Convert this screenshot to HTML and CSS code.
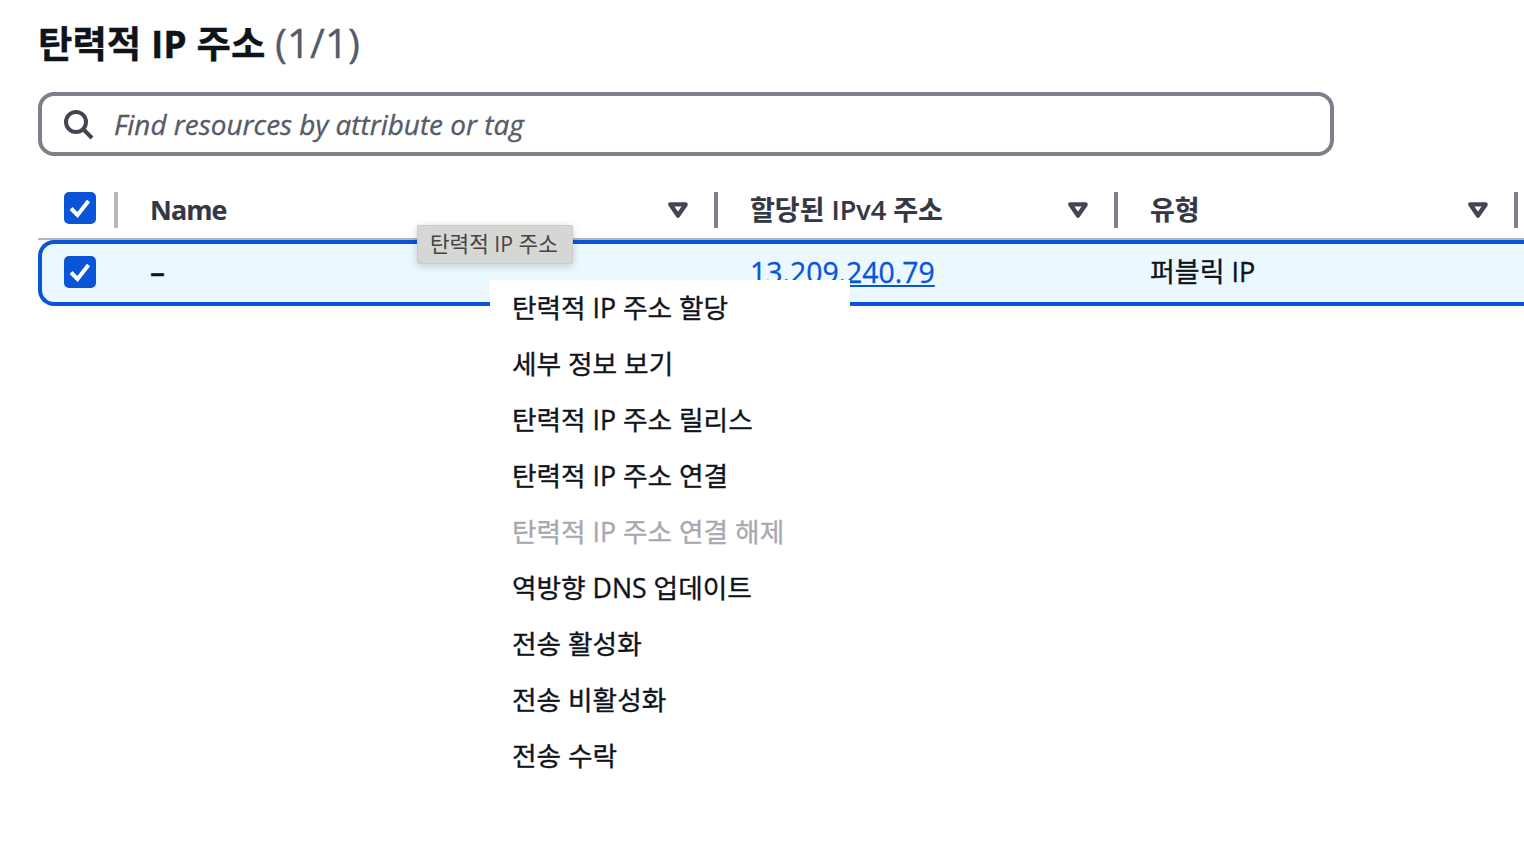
FILE: index.html
```html
<!DOCTYPE html>
<html lang="ko">
<head>
<meta charset="utf-8">
<title>탄력적 IP 주소</title>
<link rel="stylesheet" href="styles.css">
</head>
<body>
<main class="page">
  <h1 class="title">탄력적 IP 주소 <span class="count">(1/1)</span></h1>
  <div class="search">
    <svg class="search-icon" viewBox="0 0 32 32" width="32" height="32"><circle cx="14" cy="14" r="10" fill="none" stroke="#424650" stroke-width="4"/><path d="M21 21l9 9" fill="none" stroke="#424650" stroke-width="4"/></svg>
    <span class="placeholder">Find resources by attribute or tag</span>
  </div>
  <div class="table">
    <div class="thead">
      <div class="cell-check">
        <svg class="check" viewBox="0 0 32 32" width="32" height="32"><rect width="32" height="32" rx="5" fill="#0a54d8"/><path d="M7 16.5l6.5 6.5L24.5 9" fill="none" stroke="#fff" stroke-width="4"/></svg>
        <span class="divider divider-light"></span>
      </div>
      <div class="th"><span class="th-label th-name">Name</span><svg class="caret" viewBox="0 0 20 16" width="20" height="16"><path d="M2.4 2.4h15.2L10 13.6z" fill="none" stroke="#424650" stroke-width="4.4" stroke-linejoin="round"/></svg><span class="divider"></span></div>
      <div class="th"><span class="th-label">할당된 IPv4 주소</span><svg class="caret" viewBox="0 0 20 16" width="20" height="16"><path d="M2.4 2.4h15.2L10 13.6z" fill="none" stroke="#424650" stroke-width="4.4" stroke-linejoin="round"/></svg><span class="divider"></span></div>
      <div class="th"><span class="th-label">유형</span><svg class="caret" viewBox="0 0 20 16" width="20" height="16"><path d="M2.4 2.4h15.2L10 13.6z" fill="none" stroke="#424650" stroke-width="4.4" stroke-linejoin="round"/></svg><span class="divider"></span></div>
    </div>
    <div class="row">
      <div class="cell-check">
        <svg class="check" viewBox="0 0 32 32" width="32" height="32"><rect width="32" height="32" rx="5" fill="#0a54d8"/><path d="M7 16.5l6.5 6.5L24.5 9" fill="none" stroke="#fff" stroke-width="4"/></svg>
      </div>
      <div class="td"><span class="dash">–</span></div>
      <div class="td"><a class="link" href="#">13.209.240.79</a></div>
      <div class="td">퍼블릭 IP</div>
    </div>
  </div>
</main>
<div class="tooltip">탄력적 IP 주소</div>
<ul class="menu">
  <li class="menu-item">탄력적 IP 주소 할당</li>
  <li class="menu-item">세부 정보 보기</li>
  <li class="menu-item">탄력적 IP 주소 릴리스</li>
  <li class="menu-item">탄력적 IP 주소 연결</li>
  <li class="menu-item menu-item-disabled">탄력적 IP 주소 연결 해제</li>
  <li class="menu-item">역방향 DNS 업데이트</li>
  <li class="menu-item">전송 활성화</li>
  <li class="menu-item">전송 비활성화</li>
  <li class="menu-item">전송 수락</li>
</ul>
</body>
</html>
```
FILE: styles.css
```css
* { box-sizing: border-box; }
html, body { margin: 0; height: 100%; }
body {
  position: relative;
  overflow: hidden;
  background: #fff;
  color: #0f141a;
  font-family: "Open Sans", "Noto Sans CJK KR", sans-serif;
  font-size: 27px;
  font-weight: 400;
  -webkit-text-stroke: .35px currentColor;
}
.page { width: 1524px; padding: 20px 0 0 38px; }
.title {
  height: 48px;
  margin: 0;
  font-size: 37.4px;
  font-weight: 700;
  line-height: 48px;
}
.count { font-size: 40.5px; line-height: 1; font-weight: 400; color: #565b66; }
.search {
  display: flex;
  align-items: center;
  width: 1296px;
  height: 64px;
  margin-top: 24px;
  padding-left: 20px;
  border: 4px solid #7d8089;
  border-radius: 16px;
}
.search-icon { flex: none; width: 32px; height: 32px; }
.placeholder { margin-left: 20px; font-size: 27.9px; font-style: italic; color: #565b66; }
.table { margin-top: 36px; }
.thead {
  display: grid;
  grid-template-columns: 80px 600px 400px 400px;
  height: 48px;
  border-bottom: 2px solid #b4b4bb;
}
.th {
  display: flex;
  align-items: flex-start;
  padding-left: 32px;
  font-size: 27px;
  font-weight: 600;
  color: #333843;
  -webkit-text-stroke: .15px currentColor;
}
.th-label { flex: 1; line-height: 36px; }
.th-name { font-size: 26.8px; font-weight: 700; letter-spacing: -.9px; }
.caret { flex: none; margin-top: 10px; }
.divider { flex: none; width: 4px; height: 36px; margin-left: 26px; background: #7d7f88; }
.cell-check { display: flex; align-items: flex-start; padding-left: 26px; }
.cell-check .divider { margin-left: 18px; }
.divider-light { background: #b8b8c0; }
.check { flex: none; }
.row {
  display: grid;
  grid-template-columns: 76px 600px 400px 410px;
  height: 66px;
  width: 1500px;
  padding-bottom: 2px;
  border: 4px solid #0a54d8;
  border-right: 0;
  border-radius: 16px 0 0 16px;
  background: #ebf8ff;
  align-items: center;
}
.row .cell-check { padding-left: 22px; align-items: center; }
.td { padding-left: 32px; line-height: 34px; }
.dash { font-size: 30px; font-weight: 600; }
.link { color: #0a54d8; text-decoration: underline; font-size: 28.4px; }
.tooltip {
  position: absolute;
  left: 417px;
  top: 225px;
  width: 156px;
  height: 39px;
  padding-left: 12px;
  background: #d6d6d4;
  border: 1px solid #cbcbc9;
  border-radius: 2px;
  box-shadow: 0 2px 8px rgba(0, 0, 0, .18);
  color: #444;
  font-size: 21.3px;
  line-height: 35px;
  -webkit-text-stroke: 0;
  white-space: nowrap;
}
.menu {
  position: absolute;
  left: 490px;
  top: 280px;
  width: 360px;
  margin: 0;
  padding: 0;
  list-style: none;
  background: #fff;
}
.menu-item { height: 56px; padding-left: 22px; font-size: 26.7px; line-height: 55px; white-space: nowrap; }
.menu-item-disabled { color: #a8a9b0; }
```
